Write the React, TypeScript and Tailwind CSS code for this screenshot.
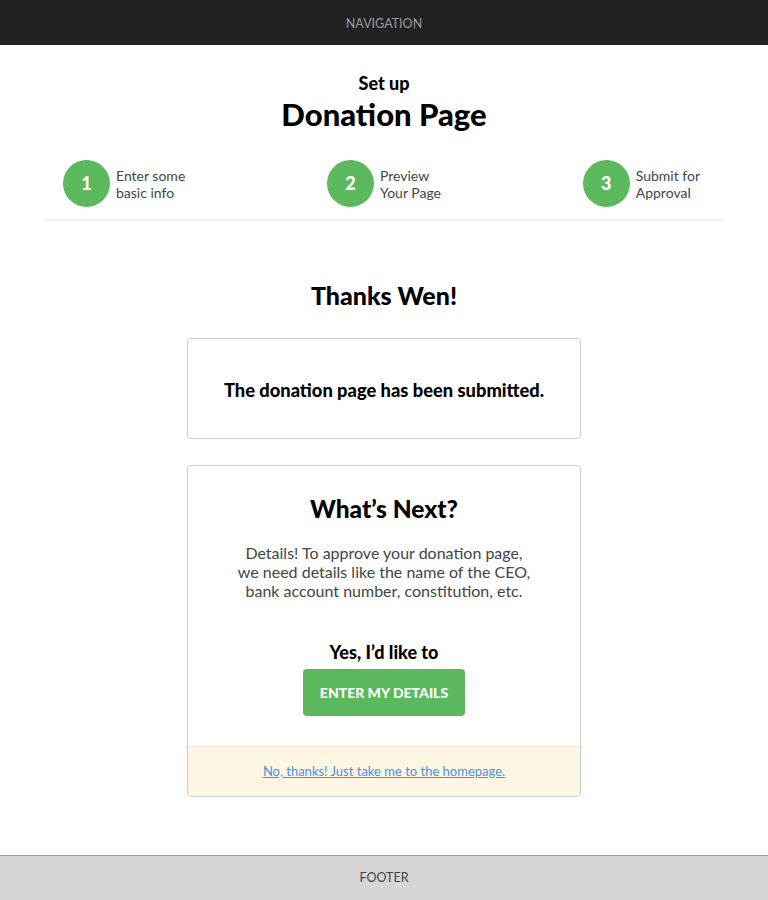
const steps = [
  { n: '1', lines: ['Enter some', 'basic info'] },
  { n: '2', lines: ['Preview', 'Your Page'] },
  { n: '3', lines: ['Submit for', 'Approval'] },
];

export default function App() {
  return (
    <div className="min-h-[900px] flex flex-col bg-white font-['Lato','Open_Sans',sans-serif] text-black">
      <nav className="h-[45px] bg-[#222222] flex items-center justify-center pt-[3px]">
        <span className="text-[12.5px] text-[#9a9a9a]">NAVIGATION</span>
      </nav>

      <main className="flex-1">
        <div className="pt-[27px] text-center">
          <h2 className="text-[18px] leading-[22px] font-black">Set up</h2>
          <h1 className="mt-[2px] text-[31px] leading-[36px] font-black">Donation Page</h1>
        </div>

        <div className="mx-[44px] mt-[28px] pb-[12px] border-b-2 border-[#eeeeee] flex justify-between pl-[19px] pr-[24px]">
          {steps.map((s) => (
            <div key={s.n} className="flex items-center gap-[6px]">
              <div className="w-[47px] h-[47px] rounded-full bg-[#5cb85c] flex items-center justify-center text-white font-black text-[18px]">
                {s.n}
              </div>
              <div className="text-[14px] leading-[17px] text-[#444444]">
                {s.lines.map((l) => (
                  <div key={l}>{l}</div>
                ))}
              </div>
            </div>
          ))}
        </div>

        <h2 className="mt-[59px] text-center text-[25px] leading-[30px] font-black">Thanks Wen!</h2>

        <div className="mx-auto w-[394px] mt-[28px] h-[101px] border border-[#cccccc] rounded-[4px] flex items-center justify-center">
          <p className="pt-[3px] text-[18.3px] leading-[26px] font-black">The donation page has been submitted.</p>
        </div>

        <div className="mx-auto w-[394px] mt-[26px] border border-[#cccccc] rounded-[4px] overflow-hidden text-center">
          <h3 className="pt-[28px] text-[24.5px] leading-[30px] font-black">What’s Next?</h3>
          <p className="mt-[19px] text-[16px] leading-[19px] text-[#444444]">
            Details! To approve your donation page,
            <br />
            we need details like the name of the CEO,
            <br />
            bank account number, constitution, etc.
          </p>
          <p className="mt-[41px] text-[18px] leading-[22px] font-black">Yes, I’d like to</p>
          <button className="mt-[6px] w-[162px] h-[47px] bg-[#5cb85c] rounded-[4px] text-white font-black text-[14px]">
            ENTER MY DETAILS
          </button>
          <div className="mt-[30px] h-[50px] bg-[#fcf6e3] border-t border-[#f8ead2] flex items-center justify-center">
            <a href="#" className="text-[13px] text-[#4a90e2] underline">
              No, thanks! Just take me to the homepage.
            </a>
          </div>
        </div>
      </main>

      <footer className="mt-[57px] h-[45px] bg-[#d6d6d6] border-t border-[#999999] flex items-center justify-center">
        <span className="text-[12.5px] text-[#444444]">FOOTER</span>
      </footer>
    </div>
  );
}
